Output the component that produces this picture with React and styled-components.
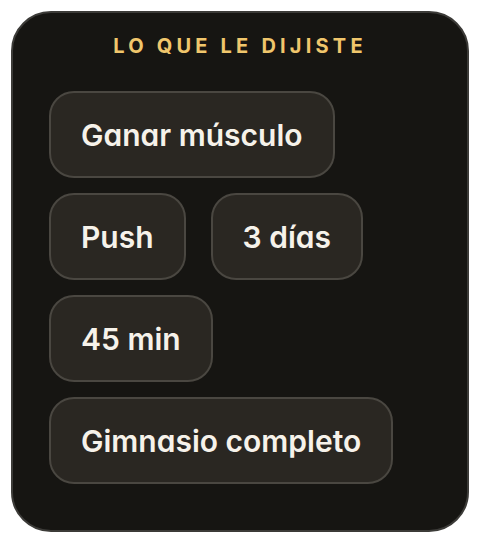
import React from "react";
import styled, { createGlobalStyle } from "styled-components";

const answers = ["Ganar músculo", "Push", "3 días", "45 min", "Gimnasio completo"];

const GlobalStyle = createGlobalStyle`
  html, body {
    margin: 0;
    padding: 0;
    background: #ffffff;
  }
  body {
    font-family: Inter, "Noto Sans", sans-serif;
  }
`;

const Page = styled.div`
  padding: 11px;
  width: 480px;
  box-sizing: border-box;
`;

const Card = styled.section`
  width: 458px;
  height: 521px;
  box-sizing: border-box;
  background: #161512;
  border: 2px solid #3c3b38;
  border-radius: 40px;
  padding: 21px 36px 0 36px;
  display: flex;
  flex-direction: column;
  gap: 33px;
`;

const Title = styled.h2`
  margin: 0;
  text-align: center;
  font-size: 20px;
  font-weight: 700;
  letter-spacing: 4.2px;
  line-height: 24px;
  color: #f0c66c;
`;

const Chips = styled.div`
  display: flex;
  flex-wrap: wrap;
  column-gap: 25px;
  row-gap: 15px;
  padding-right: 10px;
`;

const Chip = styled.div`
  height: 87px;
  box-sizing: border-box;
  display: flex;
  align-items: center;
  padding: 0 30px;
  background: #2a2722;
  border: 2px solid #4a4741;
  border-radius: 25px;
  color: #f6f2ea;
  font-size: 30px;
  font-weight: 600;
  font-feature-settings: "cv11";
  white-space: nowrap;
`;

export default function App() {
  return (
    <Page>
      <GlobalStyle />
      <Card>
        <Title>LO QUE LE DIJISTE</Title>
        <Chips>
          {answers.map((a) => (
            <Chip key={a}>{a}</Chip>
          ))}
        </Chips>
      </Card>
    </Page>
  );
}
